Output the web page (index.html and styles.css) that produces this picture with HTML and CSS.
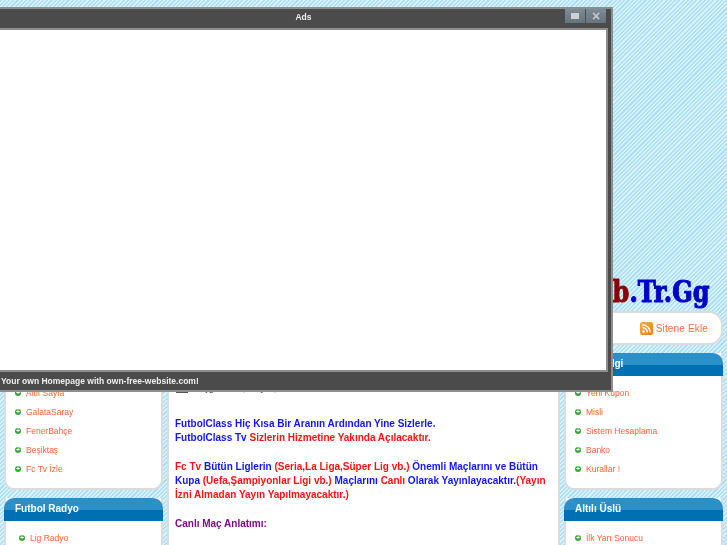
FILE: index.html
```html
<!DOCTYPE html>
<html lang="tr">
<head>
<meta charset="utf-8">
<title>FutbolClass</title>
<link rel="stylesheet" href="styles.css">
</head>
<body>
<div class="page">
  <header class="masthead">
    <div class="logo"><span class="logo-red">FutbolClass.Web</span><span class="logo-blue">.Tr.Gg</span></div>
  </header>
  <nav class="topnav">
    <a class="rss-link">
      <svg class="rss" viewBox="0 0 13 13" width="13" height="13"><defs><linearGradient id="rssg" x1="0" y1="0" x2="1" y2="1"><stop offset="0" stop-color="#fbb040"/><stop offset="1" stop-color="#ee7a14"/></linearGradient></defs><rect width="13" height="13" rx="2" fill="url(#rssg)"/><circle cx="3.6" cy="9.6" r="1.4" fill="#fff"/><path d="M2.4 5.6a5 5 0 0 1 5 5M2.4 2.8a7.8 7.8 0 0 1 7.8 7.8" fill="none" stroke="#fff" stroke-width="1.5"/></svg>
      Sitene Ekle
    </a>
  </nav>
  <div class="columns">
    <aside class="side">
      <section class="card">
        <h3 class="card-head">Menü</h3>
        <ul class="links">
          <li>Altlı Sayfa</li>
          <li>GalataSaray</li>
          <li>FenerBahçe</li>
          <li>Beşiktaş</li>
          <li>Fc Tv İzle</li>
        </ul>
      </section>
      <section class="card">
        <h3 class="card-head">Futbol Radyo</h3>
        <ul class="links indented">
          <li>Lig Radyo</li>
        </ul>
      </section>
    </aside>
    <main class="content">
      <p class="line intro"><span class="intro-mark"></span>Hoşgeldiniz, Sayın, Futbolcu</p>
      <p class="line"><span class="blue">FutbolClass Hiç Kısa Bir Aranın Ardından Yine Sizlerle.</span></p>
      <p class="line"><span class="blue">FutbolClass Tv</span> <span class="red">Sizlerin Hizmetine Yakında Açılacaktır.</span></p>
      <p class="line spaced"><span class="red">Fc Tv</span> <span class="blue">Bütün Liglerin</span> <span class="red">(Seria,La Liga,Süper Lig vb.)</span> <span class="blue">Önemli Maçlarını ve Bütün Kupa</span> <span class="red">(Uefa,Şampiyonlar Ligi vb.)</span> <span class="blue">Maçlarını</span> <span class="red">Canlı</span> <span class="blue">Olarak Yayınlayacaktır.</span><span class="red">(Yayın İzni Almadan Yayın Yapılmayacaktır.)</span></p>
      <p class="line spaced"><span class="purple">Canlı Maç Anlatımı:</span></p>
    </main>
    <aside class="side">
      <section class="card">
        <h3 class="card-head">Kasa Bilgi</h3>
        <ul class="links">
          <li>Yeni Kupon</li>
          <li>Misli</li>
          <li>Sistem Hesaplama</li>
          <li>Banko</li>
          <li>Kurallar !</li>
        </ul>
      </section>
      <section class="card">
        <h3 class="card-head">Altılı Üslü</h3>
        <ul class="links">
          <li>İlk Yarı Sonucu</li>
        </ul>
      </section>
    </aside>
  </div>
</div>
<div class="popup">
  <div class="popup-title">Ads
    <div class="popup-btns">
      <span class="pbtn"><i class="max"></i></span>
      <span class="pbtn"><i class="close">×</i></span>
    </div>
  </div>
  <div class="popup-body"></div>
  <div class="popup-foot">Your own Homepage with own-free-website.com!</div>
</div>
</body>
</html>
```
FILE: styles.css
```css
* { box-sizing: border-box; }
html, body { margin: 0; height: 545px; overflow: hidden; }
body {
  font-family: "Liberation Sans", Arial, sans-serif;
  background-color: #c6ecfa;
  background-image: repeating-linear-gradient(135deg, #ade0f6 0, #ade0f6 1.5px, #d8f3fd 1.5px, #d8f3fd 3px);
  position: relative;
}
.page { height: 545px; overflow: hidden; padding: 0 4px; filter: blur(.3px); }
.masthead { height: 311px; display: flex; align-items: flex-end; justify-content: flex-end; padding: 0 14px 2px 0; }
.logo { font-family: "DejaVu Serif Condensed", "DejaVu Serif", serif; font-weight: 700; font-size: 29px; line-height: 34px; white-space: nowrap; -webkit-text-stroke: 1px currentColor; transform: scaleX(.92); transform-origin: right center; }
.logo-red { color: #8b0000; }
.logo-blue { color: #0000cc; }
.topnav { height: 34px; background: #fff; border: 2px solid #dcdcdc; border-radius: 14px; display: flex; align-items: center; justify-content: flex-end; padding-right: 13px; }
.rss-link { color: #ff6a3c; font-size: 10px; letter-spacing: .15px; display: flex; align-items: center; gap: 3px; }
.rss { display: block; }
.columns { display: grid; grid-template-columns: 159px 1fr 159px; gap: 4px; margin-top: 8px; }
.side { display: flex; flex-direction: column; gap: 8px; }
.card { background: #fff; border: 2px solid #dcdcdc; border-top: 0; border-radius: 0 0 10px 10px; }
.card-head { margin: 0 -2px; height: 23px; background: linear-gradient(#2b90c8 0, #2b90c8 52%, #0070b4 52%, #0070b4 100%); border-radius: 10px 10px 0 0; color: #fff; font-size: 10px; font-weight: 700; line-height: 21px; padding-left: 11px; }
.links { list-style: none; margin: 0; padding: 8px 0 9px 9px; }
.links.indented { padding-left: 13px; }
.links li { height: 19px; line-height: 19px; font-size: 8.5px; color: #ff5f35; padding-left: 11px; position: relative; }
.links li::before { content: "+"; position: absolute; left: 0; top: 6px; width: 6px; height: 6px; border-radius: 50%; background: #39a539; color: #fff; font-size: 7px; line-height: 6px; text-align: center; font-weight: 700; }
.content { background: #fff; border: 2px solid #dcdcdc; border-radius: 10px 10px 0 0; height: 300px; padding: 26px 6px 0; font-size: 10px; font-weight: 700; line-height: 14.3px; }
.line { margin: 0; }
.intro { color: #444; font-weight: 400; margin-bottom: 21.5px; padding-left: 1px; }
.intro-mark { display: inline-block; width: 12px; height: 9px; background: #555; margin-right: 3px; vertical-align: -2px; }
.spaced { margin-top: 14.3px; }
.blue { color: #1414f8; }
.red { color: #f81414; }
.purple { color: #800a8a; }
.popup { position: absolute; left: -8px; top: 7px; width: 621px; height: 385px; background: #4b4b4b; border: 2px solid #8e8e8e; border-left: 0; display: flex; flex-direction: column; padding-right: 3px; filter: blur(.3px); }
.popup-title { height: 19px; color: #eee; font-size: 8.5px; font-weight: 700; line-height: 17px; text-align: center; position: relative; padding-left: 7px; flex: none; }
.popup-btns { position: absolute; right: 2px; top: 0; display: flex; gap: 1px; }
.pbtn { width: 20px; height: 14px; background: linear-gradient(#7b8b97, #66747f); display: flex; align-items: center; justify-content: center; }
.max { width: 8px; height: 6px; background: #d0d0d0; display: block; }
.close { color: #c8c8c8; font-style: normal; font-size: 14px; line-height: 11px; font-weight: 700; }
.popup-body { flex: 1; background: #fff; border: 2px solid #8e8e8e; border-left: 0; }
.popup-foot { height: 18px; color: #f0f0f0; font-size: 8.5px; font-weight: 700; line-height: 18px; padding-left: 9px; flex: none; }
```
